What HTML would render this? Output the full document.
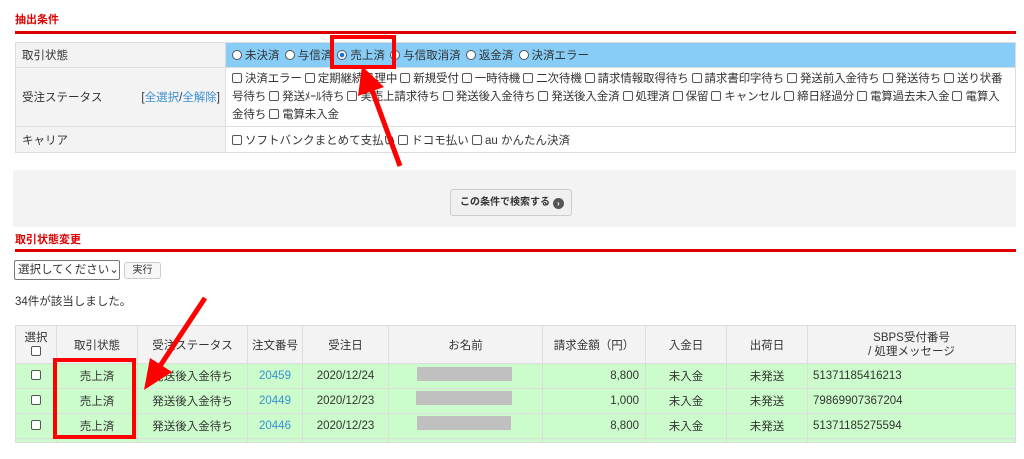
<!DOCTYPE html><html><head><meta charset="utf-8"><style>
*{margin:0;padding:0;box-sizing:border-box}
body{width:1024px;height:459px;background:#fff;font-family:"Liberation Sans","Noto Sans CJK JP",sans-serif;font-size:11.5px;color:#333;position:relative;overflow:hidden}
.a{position:absolute}
.h{color:#d00;font-weight:bold;font-size:11px}
.rl{background:#d00;height:3px}
table{border-collapse:collapse;position:absolute}
td{border:1px solid #ddd}
.cb{display:inline-block;width:10px;height:10px;border:1px solid #555;border-radius:2px;vertical-align:-1px;margin-right:3px;background:#fff}
.rd{display:inline-block;width:10px;height:10px;border:1px solid #555;border-radius:50%;vertical-align:-1px;margin-right:3px;margin-left:2px;background:#fff}
.lnk{color:#3a8fd0}
.gb{position:absolute;background:#c0c0c0;height:14px}
</style></head><body>
<div class="a h" style="left:15px;top:11px">抽出条件</div>
<div class="a rl" style="left:15px;top:31px;width:1001px"></div>
<table style="left:15px;top:42px;width:1001px">
<tr style="height:25px"><td style="width:210px;background:#f3f3f3;padding:0 6px">取引状態</td><td style="background:#87cdf7;padding:0 4px"><span class="rd"></span>未決済 <span class="rd"></span>与信済 <span class="rd" style="background:radial-gradient(#1a6fe0 35%,#fff 45%)"></span>売上済 <span class="rd"></span>与信取消済 <span class="rd"></span>返金済 <span class="rd"></span>決済エラー</td></tr>
<tr style="height:59px"><td style="background:#f3f3f3;padding:0 6px;position:relative">受注ステータス<span style="position:absolute;right:5px;top:21px">[<span class="lnk">全選択</span>/<span class="lnk">全解除</span>]</span></td><td style="padding:2px 6px;line-height:18px;vertical-align:top;letter-spacing:-0.15px"><span class="cb"></span>決済エラー <span class="cb"></span>定期継続処理中 <span class="cb"></span>新規受付 <span class="cb"></span>一時待機 <span class="cb"></span>二次待機 <span class="cb"></span>請求情報取得待ち <span class="cb"></span>請求書印字待ち <span class="cb"></span>発送前入金待ち <span class="cb"></span>発送待ち <span class="cb"></span>送り状番号待ち <span class="cb"></span>発送ﾒｰﾙ待ち <span class="cb"></span>実売上請求待ち <span class="cb"></span>発送後入金待ち <span class="cb"></span>発送後入金済 <span class="cb"></span>処理済 <span class="cb"></span>保留 <span class="cb"></span>キャンセル <span class="cb"></span>締日経過分 <span class="cb"></span>電算過去未入金 <span class="cb"></span>電算入金待ち <span class="cb"></span>電算未入金</td></tr>
<tr style="height:26px"><td style="background:#f3f3f3;padding:0 6px">キャリア</td><td style="padding:0 6px"><span class="cb"></span>ソフトバンクまとめて支払い <span class="cb"></span>ドコモ払い <span class="cb"></span>au かんたん決済</td></tr>
</table>
<div class="a" style="left:13px;top:170px;width:1003px;height:57px;background:#f3f3f3"></div>
<div class="a" style="left:450px;top:189px;width:122px;height:27px;border:1px solid #ccc;border-radius:3px;background:#f0f0f0;font-size:10px;font-weight:bold;line-height:25px;padding-left:9px">この条件で検索する <span style="display:inline-block;width:11px;height:11px;border-radius:50%;background:#555;color:#fff;font-size:8px;line-height:11px;text-align:center;vertical-align:-1px">›</span></div>
<div class="a h" style="left:15px;top:231px">取引状態変更</div>
<div class="a rl" style="left:15px;top:249px;width:1001px"></div>
<div class="a" style="left:14px;top:260px;width:106px;height:20px;border:1px solid #777;border-radius:2px;line-height:18px;padding-left:3px">選択してください⌄</div>
<div class="a" style="left:124px;top:262px;width:37px;height:17px;border:1px solid #ccc;border-radius:3px;background:#f7f7f7;font-size:10px;text-align:center;line-height:15px">実行</div>
<div class="a" style="left:15px;top:293px">34件が該当しました。</div>
<table style="left:15px;top:325px;width:1001px;text-align:center">
<tr style="height:38px;background:#f3f3f3"><td style="width:41px;line-height:14px">選択<br><span class="cb" style="margin:0"></span></td><td style="width:81px">取引状態</td><td style="width:110px">受注ステータス</td><td style="width:55px">注文番号</td><td style="width:86px">受注日</td><td style="width:154px">お名前</td><td style="width:103px">請求金額（円）</td><td style="width:81px">入金日</td><td style="width:81px">出荷日</td><td style="line-height:14px">SBPS受付番号<br>/ 処理メッセージ</td></tr>
<tr style="height:25px;background:#ccfccc"><td><span class="cb" style="margin:0"></span></td><td>売上済</td><td>発送後入金待ち</td><td class="lnk">20459</td><td>2020/12/24</td><td></td><td style="text-align:right;padding-right:6px">8,800</td><td>未入金</td><td>未発送</td><td style="text-align:left;padding-left:5px">51371185416213</td></tr>
<tr style="height:25px;background:#ccfccc"><td><span class="cb" style="margin:0"></span></td><td>売上済</td><td>発送後入金待ち</td><td class="lnk">20449</td><td>2020/12/23</td><td></td><td style="text-align:right;padding-right:6px">1,000</td><td>未入金</td><td>未発送</td><td style="text-align:left;padding-left:5px">79869907367204</td></tr>
<tr style="height:25px;background:#ccfccc"><td><span class="cb" style="margin:0"></span></td><td>売上済</td><td>発送後入金待ち</td><td class="lnk">20446</td><td>2020/12/23</td><td></td><td style="text-align:right;padding-right:6px">8,800</td><td>未入金</td><td>未発送</td><td style="text-align:left;padding-left:5px">51371185275594</td></tr>
<tr style="height:4px;background:#ccfccc"><td></td><td></td><td></td><td></td><td></td><td></td><td></td><td></td><td></td><td></td></tr>
</table>
<div class="gb" style="left:417px;top:367px;width:95px"></div>
<div class="gb" style="left:416px;top:391px;width:96px"></div>
<div class="gb" style="left:417px;top:416px;width:94px"></div>
<div class="a" style="left:330px;top:35px;width:66px;height:34px;border:4px solid #f00"></div>
<div class="a" style="left:53px;top:358px;width:83px;height:81px;border:4px solid #f00"></div>
<svg class="a" style="left:0;top:0" width="1024" height="459">
<line x1="400" y1="166" x2="372" y2="90" stroke="#f00" stroke-width="5"/>
<polygon points="362,66 358,96 384,87" fill="#f00"/>
<line x1="205" y1="298" x2="160" y2="366" stroke="#f00" stroke-width="5"/>
<polygon points="144,390 150,358 172,372" fill="#f00"/>
</svg>
</body></html>
